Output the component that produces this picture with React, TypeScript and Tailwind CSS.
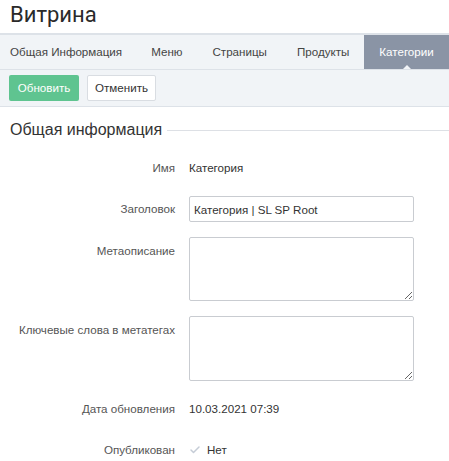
import { Check } from "lucide-react";

const tabs = ["Общая Информация", "Меню", "Страницы", "Продукты", "Категории"];

function Row({
  label,
  top,
  children,
}: {
  label: string;
  top?: boolean;
  children: React.ReactNode;
}) {
  return (
    <div className={`flex ${top ? "items-start" : "items-center"} min-h-[26px]`}>
      <div
        className={`w-[176px] shrink-0 pr-[1px] text-right text-[11.6px] text-[#555] ${
          top ? "pt-[5px]" : ""
        }`}
      >
        {label}
      </div>
      <div className="ml-[13px] w-[225px] text-[11.6px] text-[#333]">{children}</div>
    </div>
  );
}

export default function App() {
  return (
    <div className="min-h-screen bg-white font-['Liberation_Sans',Arial,sans-serif] text-[#333]">
      {/* Header */}
      <h1 className="h-[33px] px-[10px] pt-[1px] font-['Roboto',sans-serif] text-[22px] leading-[28px] text-[#2a2a2a]">
        Витрина
      </h1>

      {/* Tabs */}
      <div className="flex h-[37px] border-t-2 border-b border-[#dde2e8] bg-[#f1f4f7]">
        {tabs.map((t, i) => {
          const active = i === tabs.length - 1;
          return (
            <div
              key={t}
              className={`relative flex items-center whitespace-nowrap text-[11.6px] ${
                i === 0 ? "pl-[10px] pr-[14px]" : "px-[15px]"
              } ${active ? "bg-[#8a94a5] text-white" : "text-[#444]"}`}
            >
              {t}
              {active && (
                <span className="absolute bottom-0 left-1/2 -ml-[4px] h-0 w-0 border-x-[4px] border-b-[4px] border-x-transparent border-b-[#f1f4f7]" />
              )}
            </div>
          );
        })}
      </div>

      {/* Toolbar */}
      <div className="flex h-[37px] items-center gap-[8px] border-b border-[#dde2e8] bg-[#f1f4f7] px-[9px]">
        <button className="h-[26px] w-[70px] rounded-[2px] bg-[#5fc490] text-[11.6px] text-white">
          Обновить
        </button>
        <button className="h-[26px] w-[69px] rounded-[2px] border border-[#d9dde2] bg-white text-[11.6px] text-[#333]">
          Отменить
        </button>
      </div>

      {/* Section */}
      <div className="flex items-center gap-[5px] px-[10px] pt-[11px]">
        <h2 className="text-[16px] leading-[24px] text-[#333]">Общая информация</h2>
        <div className="mr-[-10px] h-px flex-1 bg-[#dde0e5]" />
      </div>

      <div className="mt-[13px] flex flex-col gap-[15px]">
        <Row label="Имя">Категория</Row>
        <Row label="Заголовок">
          <input
            defaultValue="Категория | SL SP Root"
            className="h-[26px] w-full rounded-[2px] border border-[#c9ccd1] px-[4px] text-[11.6px] text-[#333] outline-none"
          />
        </Row>
        <Row label="Метаописание" top>
          <textarea className="block h-[64px] w-full rounded-[2px] border border-[#c9ccd1] outline-none" />
        </Row>
        <Row label="Ключевые слова в метатегах" top>
          <textarea className="block h-[65px] w-full rounded-[2px] border border-[#c9ccd1] outline-none" />
        </Row>
        <Row label="Дата обновления">10.03.2021 07:39</Row>
        <Row label="Опубликован">
          <span className="flex items-center gap-[6px]">
            <Check className="h-[12px] w-[12px] text-[#c5ccd6]" strokeWidth={3} />
            Нет
          </span>
        </Row>
      </div>
    </div>
  );
}
